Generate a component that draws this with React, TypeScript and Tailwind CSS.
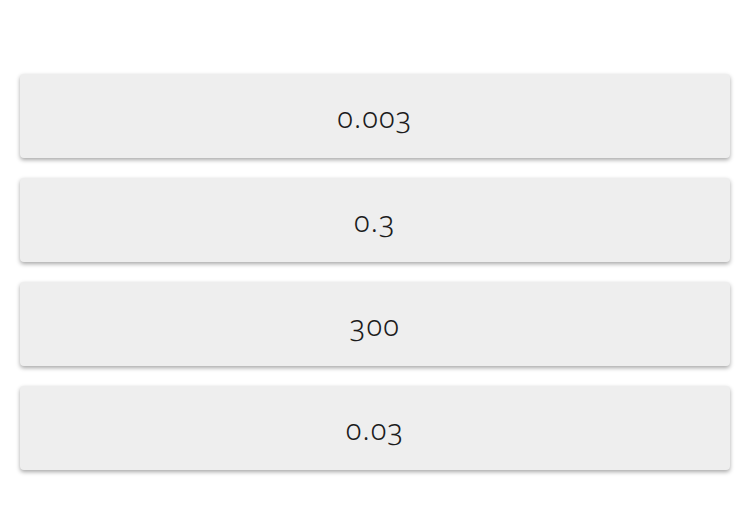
const answers = ["0.003", "0.3", "300", "0.03"];

export default function App() {
  return (
    <div className="w-[750px] h-[515px] bg-white pt-[74px] px-5 flex flex-col gap-[20px]" style={{ fontFamily: '"Noto Sans", sans-serif' }}>
      {answers.map((a, i) => (
        <button
          key={i}
          className="h-[84px] w-full rounded-[4px] bg-[#eeeeee] shadow-[0_2px_4px_rgba(0,0,0,0.35)] flex items-center justify-center pt-[2px] text-[29px] font-light text-[#1c1c1c] oldstyle-nums tracking-[0.04em]"
        >
          {a}
        </button>
      ))}
    </div>
  );
}
